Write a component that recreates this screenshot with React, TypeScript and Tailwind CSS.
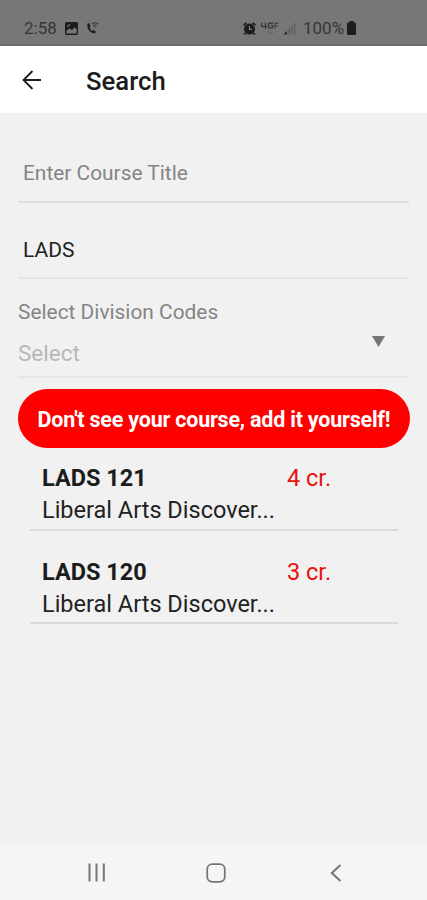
import React from "react";

type Course = {
  id: number;
  code: string;
  title: string;
  credits: number;
};

const courses: Course[] = [
  {
    id: 1,
    code: "LADS 121",
    title: "Liberal Arts Discover...",
    credits: 4,
  },
  {
    id: 2,
    code: "LADS 120",
    title: "Liberal Arts Discover...",
    credits: 3,
  },
];

function StatusBar() {
  return (
    <div className="h-[46px] bg-[#777777] border-b-2 border-[#6c6c6c] pt-[18px] pl-6 flex items-start text-[17px] leading-[21px] text-[#353535]">
      <span className="w-[41px]">2:58</span>
      <svg className="w-[13px] h-[13px] mt-1" viewBox="0 0 13 13">
        <rect x="0.7" y="0.7" width="11.6" height="11.6" rx="1" fill="none" stroke="#1c1c1c" strokeWidth="1.400" />
        <path d="M1 1h11v6L9.500 5.500 7 8 4.500 6.500 1 9z" fill="#1c1c1c" />
        <path d="M3 5.500V3h2.500" fill="none" stroke="#777777" strokeWidth="1" />
      </svg>
      <svg className="w-[13px] h-[13px] mt-1 ml-2" viewBox="0 0 13 13" fill="none">
        <path d="M1.500 1.500C.5 6 4 11.500 9 11.500L9.800 9.500 7.500 8 6 9C4.800 8.200 4 7 3.700 5.500L4.500 4.200 3.200 1.300z" fill="#1c1c1c" />
        <path d="M5.500 1.800Q9 -.5 12.500 1.800M7 3.600Q9 2.200 11 3.600" stroke="#333333" strokeWidth="1" />
        <path d="M8 4.800h2L9 6z" fill="#333333" />
      </svg>
      <svg className="w-[13px] h-[13px] mt-1 ml-[144px]" viewBox="0 0 13 13" fill="none">
        <circle cx="6.500" cy="7" r="5.500" fill="#1c1c1c" />
        <path d="M.5 3L3.500 .8M12.500 3L9.500 .8M2.500 11L1 12.600M10.500 11L12 12.600" stroke="#1c1c1c" strokeWidth="1.600" />
        <path d="M6.500 4v3.300H9" stroke="#777777" strokeWidth="1.200" />
      </svg>
      <svg className="w-[18px] h-[14px] mt-1 ml-[5px]" viewBox="0 0 18 14" fill="none">
        <g stroke="#333333" strokeWidth="1.200">
          <path d="M4.500 7V.8M.7 .8V4.500H6" />
          <path d="M12 1.200H8.500Q7.500 1.200 7.500 2.200V5Q7.500 6 8.500 6H11.800V3.600H9.800" />
          <path d="M14 .8V6.500M14 1.200H17.500M14 3.800H17" strokeWidth="0.900" />
        </g>
        <path d="M6 10.500l1.500-1.500L9 10.500zM9.500 10.500L11 12l1.500-1.500z" fill="#5b5b5b" />
      </svg>
      <svg className="w-[13px] h-[13px] mt-1 ml-1" viewBox="0 0 13 13">
        <path d="M.5 12.500L4 9v3.500z" fill="#222222" />
        <path d="M5 12.500V7.500L7.500 5v7.500zM8.500 12.500V4L9.800 2.700v9.800zM10.800 12.500V1.800L12.500 .5v12z" fill="#626262" />
      </svg>
      <span className="ml-[7px] w-[44px]">100%</span>
      <svg className="w-[9px] h-[14px] mt-[3px]" viewBox="0 0 9 14">
        <path d="M2.500 0h4v1.500H8q1 0 1 1V13q0 1-1 1H1q-1 0-1-1V2.500q0-1 1-1h1.500z" fill="#1c1c1c" />
      </svg>
    </div>
  );
}

function Header() {
  return (
    <div className="h-[67px] bg-white flex items-center pl-[22px]">
      <svg className="w-5 h-5" viewBox="0 0 20 20" fill="none" stroke="#1c1c1c" strokeWidth="1.800">
        <path d="M19 10H1.500M10.500 1L1.500 10l9 9" />
      </svg>
      <h1 className="ml-[44px] mt-[3px] text-[25.7px] leading-8 font-medium text-[#1c1c1c]">Search</h1>
    </div>
  );
}

function NavBar() {
  return (
    <div className="h-14 bg-[#f5f5f5] flex items-center pl-[87px]">
      <svg className="w-[19px] h-[19px] mt-px" viewBox="0 0 19 19" stroke="#777777" strokeWidth="2">
        <path d="M2.500 .5v18M9.500 .5v18M16.800 .5v18" />
      </svg>
      <svg className="w-5 h-5 mt-[2px] ml-[100px]" viewBox="0 0 20 20" fill="none" stroke="#777777" strokeWidth="1.800">
        <rect x="1.200" y="1.200" width="17.600" height="17.600" rx="5" />
      </svg>
      <svg className="w-3 h-[18px] mt-[2px] ml-[104px]" viewBox="0 0 12 18" fill="none" stroke="#777777" strokeWidth="2">
        <path d="M10.500 1L1.800 9l8.700 8" />
      </svg>
    </div>
  );
}

function App() {
  const courseRows = courses.map((course) => (
    <div key={course.id} className="h-[93.5px] border-b-2 border-[#dadada] flex pl-3 pt-[25px] text-[23.5px] leading-8">
      <div className="w-[245px] whitespace-nowrap">
        <div className="font-bold text-[#1c1c1c]">{course.code}</div>
        <div className="text-[#222222]">{course.title}</div>
      </div>
      <div className="text-[#e8120c]">{course.credits} cr.</div>
    </div>
  ));

  return (
    <div className="w-full h-[900px] flex flex-col overflow-hidden bg-[#f1f1f1] font-['Roboto',sans-serif]">
      <StatusBar />
      <Header />
      <div className="flex-1 pl-[18px] pr-[18px] flex flex-col">
        <div className="h-[90px] pt-[44px] pl-[5px] border-b-2 border-[#dfdfdf] text-[20.9px] leading-8 text-[#858585]">
          Enter Course Title
        </div>
        <div className="h-[76px] pt-[31px] pl-[5px] border-b-2 border-[#e4e4e4] text-[21px] leading-8 text-[#222222]">
          LADS
        </div>
        <div className="h-[99px] pt-[17px] border-b-2 border-[#e6e6e6]">
          <div className="text-[20.9px] leading-8 text-[#858585]">Select Division Codes</div>
          <div className="flex items-start justify-between pr-6">
            <span className="mt-[9px] text-[22.5px] leading-8 text-[#b8b8b8]">Select</span>
            <svg className="w-[13px] h-[11px] mt-2" viewBox="0 0 13 11">
              <path d="M0 0h13L6.500 11z" fill="#777777" />
            </svg>
          </div>
        </div>
        <button className="h-[59px] mt-[11px] -mr-px rounded-full bg-[#ff0000] text-white text-[21.5px] tracking-[-0.22px] font-bold whitespace-nowrap pt-[4px]">
          Don't see your course, add it yourself!
        </button>
        <div className="ml-3 mr-[11px] -mt-[11px]">{courseRows}</div>
      </div>
      <NavBar />
    </div>
  );
}

export default App;
